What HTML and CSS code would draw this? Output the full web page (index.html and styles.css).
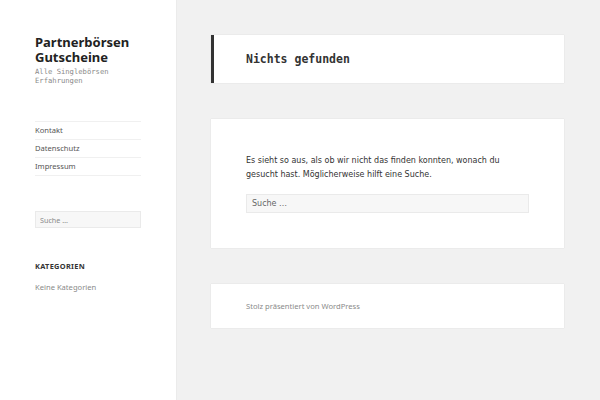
FILE: index.html
```html
<!DOCTYPE html>
<html lang="de">
<head>
    <meta charset="UTF-8">
    <meta name="viewport" content="width=device-width, initial-scale=1.0">
    <title>Nichts gefunden – Partnerbörsen Gutscheine</title>
    <link rel="stylesheet" href="styles.css">
</head>
<body>
    <div class="site">
        <aside class="sidebar">
            <header class="site-header">
                <p class="site-title">Partnerbörsen Gutscheine</p>
                <p class="site-description">Alle Singlebörsen Erfahrungen</p>
            </header>

            <nav class="main-navigation">
                <ul>
                    <li><a href="#">Kontakt</a></li>
                    <li><a href="#">Datenschutz</a></li>
                    <li><a href="#">Impressum</a></li>
                </ul>
            </nav>

            <form class="search-form sidebar-search">
                <input type="search" class="search-field" placeholder="Suche …">
            </form>

            <section class="widget">
                <h2 class="widget-title">Kategorien</h2>
                <ul>
                    <li>Keine Kategorien</li>
                </ul>
            </section>
        </aside>

        <main class="content">
            <header class="page-header">
                <h1 class="page-title">Nichts gefunden</h1>
            </header>

            <section class="no-results">
                <p>Es sieht so aus, als ob wir nicht das finden konnten, wonach du gesucht hast. Möglicherweise hilft eine Suche.</p>
                <form class="search-form">
                    <input type="search" class="search-field" placeholder="Suche …">
                </form>
            </section>

            <footer class="site-footer">
                <a href="#">Stolz präsentiert von WordPress</a>
            </footer>
        </main>
    </div>
</body>
</html>
```

FILE: styles.css
```css
html, body {
    margin: 0;
    padding: 0;
    height: 100%;
}

body {
    background-color: #f1f1f1;
    color: #333;
    font-family: "Noto Sans", sans-serif;
    overflow: hidden;
}

a {
    color: inherit;
    text-decoration: none;
}

ul {
    list-style: none;
    margin: 0;
    padding: 0;
}

.site {
    display: flex;
    min-height: 100%;
}

/* Sidebar */

.sidebar {
    width: 106px;
    flex-shrink: 0;
    padding: 35px 35px 0;
    background-color: #fff;
    box-shadow: 0 0 1px rgba(0, 0, 0, 0.15);
}

.site-title {
    margin: 0;
    width: 100px;
    font-size: 13px;
    font-weight: 700;
    line-height: 15px;
    color: #222;
}

.site-description {
    margin: 2px 0 0;
    font-family: "DejaVu Sans Mono", monospace;
    font-size: 7.2px;
    line-height: 9px;
    color: #8a8a8a;
}

.main-navigation {
    margin-top: 36px;
}

.main-navigation li {
    border-top: 1px solid #f0f0f0;
    font-size: 7.6px;
    line-height: 17px;
    color: #555;
}

.main-navigation li:last-child {
    border-bottom: 1px solid #f0f0f0;
}

.search-field {
    display: block;
    box-sizing: border-box;
    width: 100%;
    margin: 0;
    background-color: #f7f7f7;
    border: 1px solid #eaeaea;
    border-radius: 0;
    font-family: "Noto Sans", sans-serif;
    color: #707070;
    outline: none;
}

.search-field::placeholder {
    color: #8a8a8a;
}

.sidebar-search {
    margin-top: 35px;
}

.sidebar-search .search-field {
    height: 17px;
    padding: 0 4px;
    font-size: 7.2px;
}

.widget {
    margin-top: 32px;
}

.widget-title {
    margin: 0;
    font-size: 7.4px;
    font-weight: 700;
    letter-spacing: 0.3px;
    line-height: 12px;
    text-transform: uppercase;
    color: #333;
}

.widget li {
    margin-top: 9px;
    font-size: 7.6px;
    line-height: 12px;
    color: #8a8a8a;
}

/* Content */

.content {
    width: 353px;
    padding: 35px 0 0 35px;
    display: flex;
    flex-direction: column;
    gap: 36px;
}

.page-header,
.no-results,
.site-footer {
    background-color: #fff;
    box-shadow: 0 0 1px rgba(0, 0, 0, 0.15);
}

.page-header {
    border-left: 3px solid #333;
    padding: 0 32px;
    height: 48px;
    display: flex;
    align-items: center;
}

.page-title {
    margin: 0;
    font-family: "DejaVu Sans Mono", monospace;
    font-size: 11.5px;
    font-weight: 700;
    color: #333;
}

.no-results {
    padding: 35px 35px 35px;
}

.no-results p {
    margin: 0 0 12px;
    font-family: "DejaVu Sans", sans-serif;
    font-size: 8px;
    line-height: 14px;
    color: #333;
}

.no-results .search-field {
    height: 19px;
    padding: 0 5px;
    font-size: 8px;
    font-family: "DejaVu Sans", sans-serif;
}

.no-results .search-field::placeholder {
    color: #666;
}

.site-footer {
    height: 44px;
    padding: 0 35px;
    display: flex;
    align-items: center;
    font-size: 7.6px;
    color: #8a8a8a;
}
```
